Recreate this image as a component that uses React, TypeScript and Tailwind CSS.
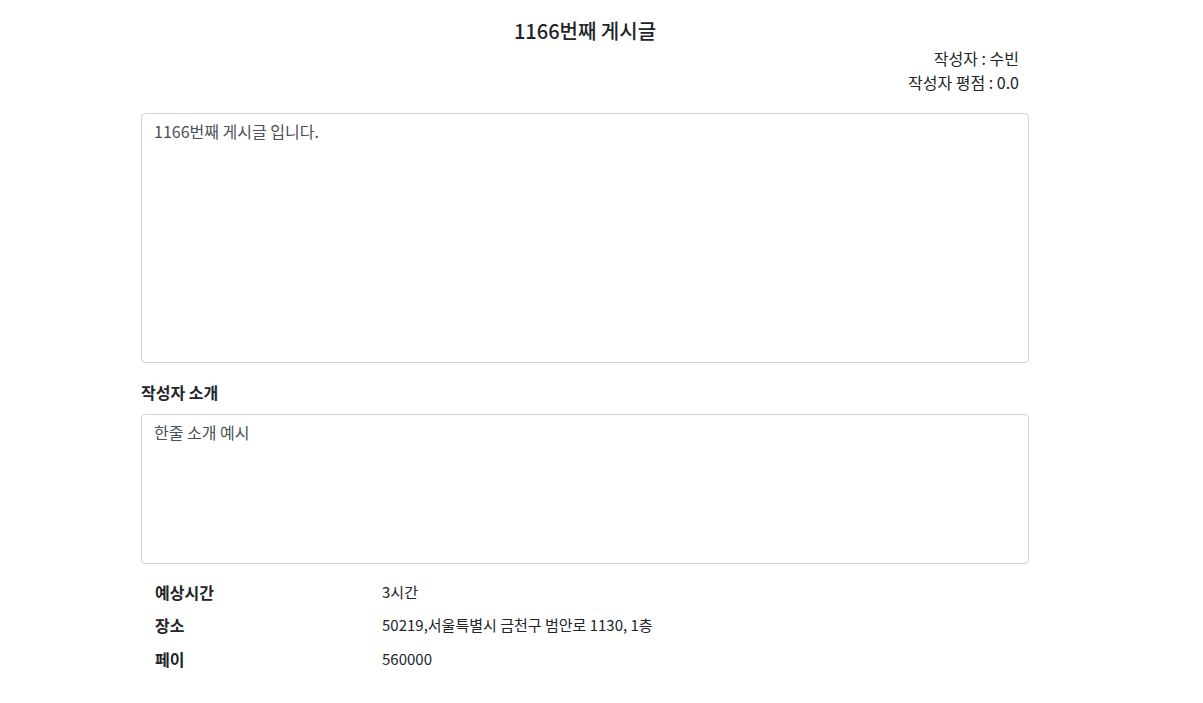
import React from 'react';

const rows = [
  { label: '예상시간', value: '3시간' },
  { label: '장소', value: '50219,서울특별시 금천구 범안로 1130, 1층' },
  { label: '페이', value: '560000' },
];

export default function App() {
  return (
    <div
      className="min-h-[703px] bg-white text-[#212529]"
      style={{ fontFamily: '"Noto Sans CJK KR", "Noto Sans", sans-serif' }}
    >
      <div className="ml-[141px] w-[888px] pt-[17px]">
        <h2 className="text-center text-[20px] leading-[28px] font-medium">1166번째 게시글</h2>
        <div className="mt-[1px] pr-[10px] text-right text-[16px] leading-[24px]">
          <div>작성자 : 수빈</div>
          <div>작성자 평점 : 0.0</div>
        </div>

        <textarea
          readOnly
          defaultValue="1166번째 게시글 입니다."
          className="mt-[19px] block h-[250px] w-full resize-none rounded-[4px] border border-[#ced4da] px-3 py-[5px] text-[16px] leading-[24px] text-[#495057] outline-none"
        />

        <div className="mt-[17px] text-[16px] leading-[24px] font-bold">작성자 소개</div>
        <textarea
          readOnly
          defaultValue="한줄 소개 예시"
          className="mt-[10px] block h-[150px] w-full resize-none rounded-[4px] border border-[#ced4da] px-3 py-[5px] text-[16px] leading-[24px] text-[#495057] outline-none"
        />

        <table className="mt-[11px] text-[16px] leading-[24px]">
          <tbody>
            {rows.map((r) => (
              <tr key={r.label}>
                <td className="w-[241px] py-[4.75px] pl-[14px] font-bold">{r.label}</td>
                <td className="py-[4.75px] text-[15px]">{r.value}</td>
              </tr>
            ))}
          </tbody>
        </table>
      </div>
    </div>
  );
}
